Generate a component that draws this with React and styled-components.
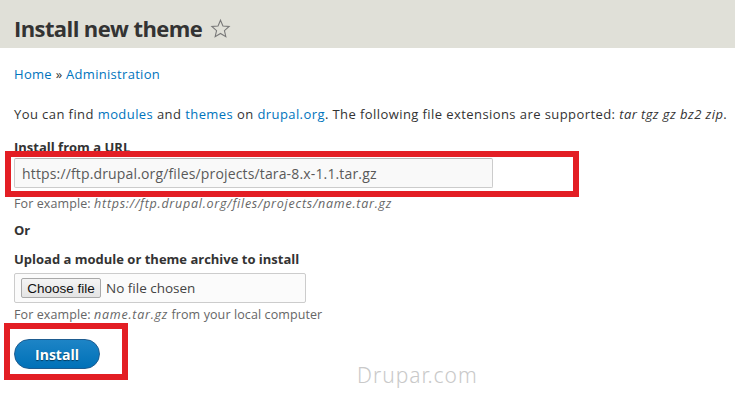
import React from "react";
import styled, { createGlobalStyle } from "styled-components";

const Global = createGlobalStyle`
  html, body { margin: 0; padding: 0; background: #fff; }
  body { font-family: "Open Sans", "DejaVu Sans", sans-serif; font-size: 13px; color: #333; letter-spacing: 0.3px; }
`;

const Page = styled.div`
  width: 735px;
  height: 418px;
  position: relative;
  overflow: hidden;
`;

const Header = styled.header`
  background: #e0e0d8;
  height: 48px;
  display: flex;
  align-items: center;
  padding: 8px 14px 0;
  box-sizing: border-box;
`;

const Title = styled.h1`
  margin: 0;
  font-size: 22px;
  font-weight: 700;
  letter-spacing: -0.6px;
  color: #333;
  display: flex;
  align-items: center;
  gap: 8px;
`;

const Main = styled.main`
  padding: 16px 14px 0;
  display: flex;
  flex-direction: column;
`;

const Crumbs = styled.nav`
  line-height: 20px;
  color: #333;
  a { color: #0074bd; text-decoration: none; }
`;

const Para = styled.p`
  margin: 20px 0 0;
  line-height: 20px;
  white-space: nowrap;
  letter-spacing: 0.42px;
  a { color: #0074bd; text-decoration: none; }
  em { font-style: italic; }
`;

const Label = styled.div`
  margin-top: ${p => p.$mt}px;
  font-weight: 700;
  line-height: 20px;
  letter-spacing: 0;
`;

const Field = styled.div`
  position: relative;
  margin-top: ${p => p.$mt}px;
`;

const Highlight = styled.div`
  position: absolute;
  border: 6px solid #e31e24;
  pointer-events: none;
  left: ${p => p.$l}px;
  top: ${p => p.$t}px;
  width: ${p => p.$w}px;
  height: ${p => p.$h}px;
  box-sizing: border-box;
`;

const TextInput = styled.div`
  width: 479px;
  height: 30px;
  box-sizing: border-box;
  border: 1px solid #ccc;
  border-top-color: #b8b8b8;
  border-radius: 2px;
  background: #f9f9f9;
  padding: 0 7px;
  display: flex;
  align-items: center;
  color: #595959;
  font-size: 14px;
  letter-spacing: 0.15px;
`;

const Desc = styled.div`
  font-size: 12.5px;
  color: #666;
  line-height: 16px;
  letter-spacing: 0.1px;
  margin-top: ${p => p.$mt}px;
  em { font-style: italic; letter-spacing: 0.75px; }
`;

const FileBox = styled.div`
  width: 292px;
  height: 30px;
  box-sizing: border-box;
  border: 1px solid #ccc;
  border-radius: 2px;
  background: #fbfbfb;
  display: flex;
  align-items: center;
  padding-left: 6px;
  gap: 5px;
  letter-spacing: 0;
`;

const ChooseBtn = styled.div`
  height: 20px;
  width: 80px;
  box-sizing: border-box;
  border: 1px solid #a9a9a9;
  border-radius: 2px;
  background: linear-gradient(#f4f4f4, #e4e4e4);
  font-family: "Liberation Sans", Arial, sans-serif;
  font-size: 13.5px;
  color: #111;
  display: flex;
  align-items: center;
  justify-content: center;
`;

const NoFile = styled.span`
  color: #444;
  font-size: 13.5px;
`;

const InstallBtn = styled.button`
  width: 86px;
  height: 30px;
  border: 1px solid #1e5c90;
  border-radius: 20px;
  background: linear-gradient(#1d84c6, #0071b8);
  color: #fff;
  font-family: inherit;
  font-weight: 700;
  font-size: 14px;
  letter-spacing: 0;
  text-shadow: 0 1px 1px rgba(0,0,0,0.5);
  padding: 0;
  display: block;
`;

const Watermark = styled.div`
  position: absolute;
  left: 357px;
  top: 361px;
  font-family: "Noto Sans", sans-serif;
  font-weight: 300;
  font-size: 21px;
  color: #c9c9c9;
  letter-spacing: 1px;
`;

const Star = () => (
  <svg width="21" height="21" viewBox="0 0 24 24" fill="none" stroke="#777" strokeWidth="1.2" strokeLinejoin="miter">
    <path d="M12 2.5l2.8 6.6 7.1.6-5.4 4.7 1.6 7-6.1-3.7-6.1 3.7 1.6-7-5.4-4.7 7.1-.6z" />
  </svg>
);

export default function App() {
  return (
    <Page>
      <Global />
      <Header>
        <Title>Install new theme <Star /></Title>
      </Header>
      <Main>
        <Crumbs><a href="#">Home</a> » <a href="#">Administration</a></Crumbs>
        <Para>
          You can find <a href="#">modules</a> and <a href="#">themes</a> on <a href="#">drupal.org</a>. The following file extensions are supported: <em>tar tgz gz bz2 zip</em>.
        </Para>
        <Label $mt={13}>Install from a URL</Label>
        <Field $mt={1}>
          <TextInput>https://ftp.drupal.org/files/projects/tara-8.x-1.1.tar.gz</TextInput>
          <Highlight $l={-9} $t={-7} $w={574} $h={46} />
        </Field>
        <Desc $mt={8}>For example: <em>https://ftp.drupal.org/files/projects/name.tar.gz</em></Desc>
        <Label $mt={8}>Or</Label>
        <Label $mt={9}>Upload a module or theme archive to install</Label>
        <Field $mt={4}>
          <FileBox>
            <ChooseBtn>Choose file</ChooseBtn>
            <NoFile>No file chosen</NoFile>
          </FileBox>
        </Field>
        <Desc $mt={4}>For example: <em>name.tar.gz</em> from your local computer</Desc>
        <Field $mt={16}>
          <InstallBtn>Install</InstallBtn>
          <Highlight $l={-10} $t={-16} $w={124} $h={57} />
        </Field>
      </Main>
      <Watermark>Drupar.com</Watermark>
    </Page>
  );
}
